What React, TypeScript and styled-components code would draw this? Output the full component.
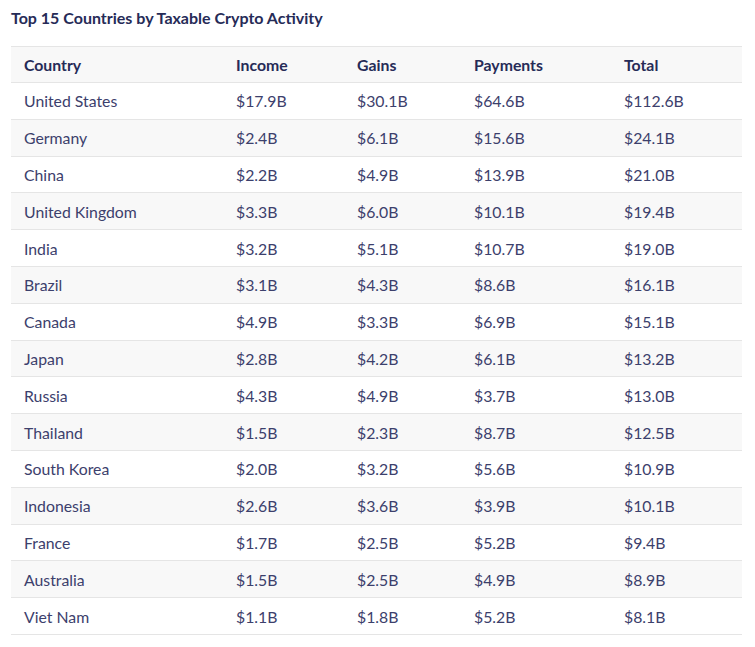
import React from "react";
import styled, { createGlobalStyle } from "styled-components";

const Global = createGlobalStyle`
  html, body { margin: 0; padding: 0; background: #ffffff; }
  body { font-family: Lato, "Open Sans", sans-serif; }
`;

const Page = styled.div`
  padding: 9px 13px 0 11px;
  width: 755px;
  box-sizing: border-box;
`;

const Title = styled.h2`
  margin: 0 0 19px 0;
  font-size: 16px;
  line-height: 18px;
  font-weight: 700;
  color: #262b57;
`;

const Table = styled.table`
  width: 731px;
  border-collapse: collapse;
  table-layout: fixed;
  font-size: 15.8px;
  color: #3c406c;
`;

const Col = styled.col<{ w: number }>`
  width: ${(p) => p.w}px;
`;

const HeadCell = styled.th`
  box-sizing: border-box;
  text-align: left;
  font-weight: 700;
  color: #262b57;
  padding: 0 0 0 13px;
  height: 36px;
  background: #f8f8f8;
  border-top: 1px solid #e5e5e5;
  border-bottom: 1px solid #e5e5e5;
`;

const Row = styled.tr<{ shaded: boolean }>`
  background: ${(p) => (p.shaded ? "#f8f8f8" : "#ffffff")};
`;

const Cell = styled.td`
  box-sizing: border-box;
  padding: 0 0 0 13px;
  height: 36.8px;
  border-bottom: 1px solid #e5e5e5;
  white-space: nowrap;
`;

const columns = [
  { label: "Country", w: 212 },
  { label: "Income", w: 121 },
  { label: "Gains", w: 117 },
  { label: "Payments", w: 150 },
  { label: "Total", w: 131 },
];

const rows: string[][] = [
  ["United States", "$17.9B", "$30.1B", "$64.6B", "$112.6B"],
  ["Germany", "$2.4B", "$6.1B", "$15.6B", "$24.1B"],
  ["China", "$2.2B", "$4.9B", "$13.9B", "$21.0B"],
  ["United Kingdom", "$3.3B", "$6.0B", "$10.1B", "$19.4B"],
  ["India", "$3.2B", "$5.1B", "$10.7B", "$19.0B"],
  ["Brazil", "$3.1B", "$4.3B", "$8.6B", "$16.1B"],
  ["Canada", "$4.9B", "$3.3B", "$6.9B", "$15.1B"],
  ["Japan", "$2.8B", "$4.2B", "$6.1B", "$13.2B"],
  ["Russia", "$4.3B", "$4.9B", "$3.7B", "$13.0B"],
  ["Thailand", "$1.5B", "$2.3B", "$8.7B", "$12.5B"],
  ["South Korea", "$2.0B", "$3.2B", "$5.6B", "$10.9B"],
  ["Indonesia", "$2.6B", "$3.6B", "$3.9B", "$10.1B"],
  ["France", "$1.7B", "$2.5B", "$5.2B", "$9.4B"],
  ["Australia", "$1.5B", "$2.5B", "$4.9B", "$8.9B"],
  ["Viet Nam", "$1.1B", "$1.8B", "$5.2B", "$8.1B"],
];

export default function App() {
  return (
    <>
      <Global />
      <Page>
        <Title>Top 15 Countries by Taxable Crypto Activity</Title>
        <Table>
          <colgroup>
            {columns.map((c) => (
              <Col key={c.label} w={c.w} />
            ))}
          </colgroup>
          <thead>
            <tr>
              {columns.map((c) => (
                <HeadCell key={c.label}>{c.label}</HeadCell>
              ))}
            </tr>
          </thead>
          <tbody>
            {rows.map((r, i) => (
              <Row key={r[0]} shaded={i % 2 === 1}>
                {r.map((v, j) => (
                  <Cell key={j}>{v}</Cell>
                ))}
              </Row>
            ))}
          </tbody>
        </Table>
      </Page>
    </>
  );
}
